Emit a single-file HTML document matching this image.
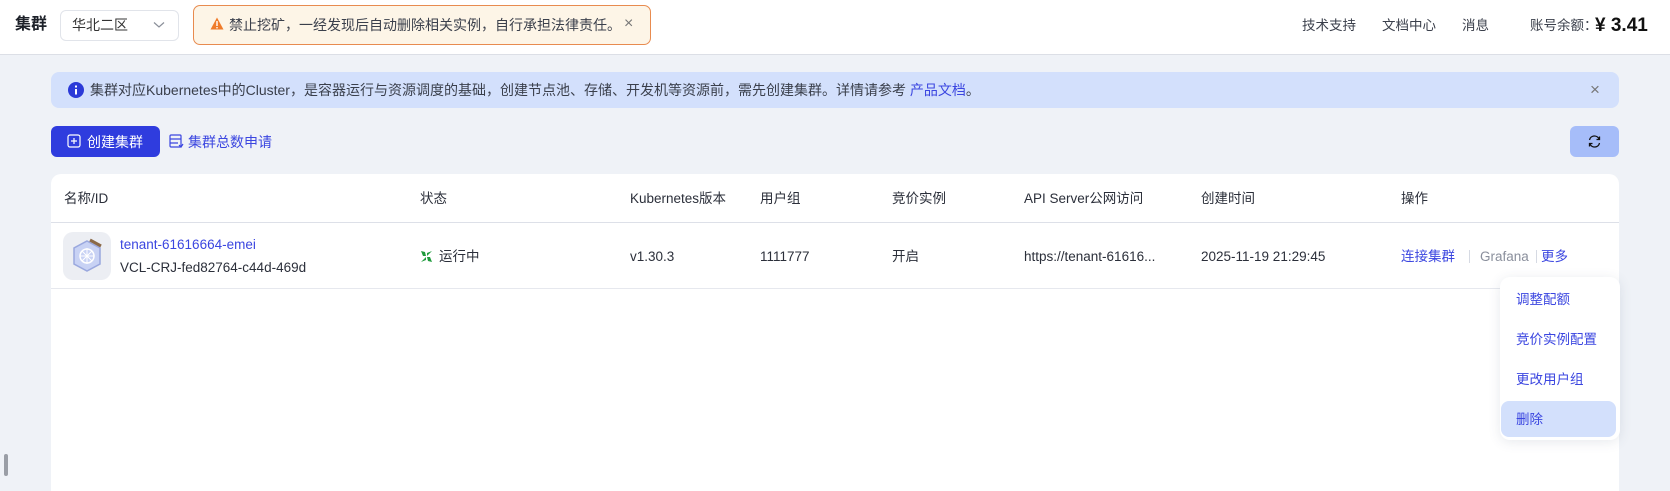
<!DOCTYPE html>
<html><head><meta charset="utf-8"><style>
*{box-sizing:border-box;margin:0;padding:0}
html{width:1670px;height:491px;overflow:hidden}
body{width:1670px;height:491px;overflow:hidden;background:#eff2f7;font-family:"Liberation Sans","Noto Sans CJK SC",sans-serif;font-size:13.5px;color:#2b2f3a;position:relative}
.abs{position:absolute}
.top{left:0;top:0;width:1670px;height:55px;background:#fff;border-bottom:1px solid #dcdfe6}
.t{position:absolute;white-space:nowrap;line-height:1}
.blue{color:#3b46e0}
</style></head><body>
<div class="abs top"></div>
<div class="t" style="left:15px;top:17px;font-size:16px;font-weight:bold;color:#1d2129">集群</div>
<div class="abs" style="left:60px;top:10px;width:119px;height:31px;border:1px solid #e1e4ea;border-radius:6px"></div>
<div class="t" style="left:72px;top:18px;color:#333;font-size:14px">华北二区</div>
<svg class="abs" style="left:153px;top:21px" width="12" height="8" viewBox="0 0 12 8"><path d="M1 1.5L6 6L11 1.5" fill="none" stroke="#8a8f99" stroke-width="1.2"/></svg>
<div class="abs" style="left:193px;top:5px;width:458px;height:40px;background:#fdf5e7;border:1px solid #e88b4f;border-radius:7px"></div>
<svg class="abs" style="left:210px;top:17px" width="14" height="13" viewBox="0 0 14 13"><path d="M7 0.5L13.5 12.5H0.5Z" fill="#ef7b2a"/><rect x="6.3" y="4" width="1.4" height="5" fill="#fff"/><rect x="6.3" y="10" width="1.4" height="1.4" fill="#fff"/></svg>
<div class="t" style="left:229px;top:18px;color:#3a3f4b;font-size:14px">禁止挖矿，一经发现后自动删除相关实例，自行承担法律责任。</div>
<div class="t" style="left:624px;top:16px;color:#777;font-size:16px">×</div>
<div class="t" style="left:1302px;top:19px;color:#3a3f4b">技术支持</div>
<div class="t" style="left:1382px;top:19px;color:#3a3f4b">文档中心</div>
<div class="t" style="left:1462px;top:19px;color:#3a3f4b">消息</div>
<div class="t" style="left:1530px;top:19px;color:#3a3f4b">账号余额：</div>
<div class="t" style="left:1595px;top:16px;font-size:19px;font-weight:bold;color:#111">¥ 3.41</div>

<div class="abs" style="left:51px;top:72px;width:1568px;height:36px;background:#d3e0fc;border-radius:8px"></div>
<svg class="abs" style="left:68px;top:82px" width="16" height="16" viewBox="0 0 16 16"><circle cx="8" cy="8" r="8" fill="#2b3ad8"/><rect x="7" y="7" width="2" height="5.5" fill="#fff"/><rect x="7" y="3.5" width="2" height="2" fill="#fff"/></svg>
<div class="t" style="left:90px;top:83px;color:#3a3f4b;font-size:14px">集群对应Kubernetes中的Cluster，是容器运行与资源调度的基础，创建节点池、存储、开发机等资源前，需先创建集群。详情请参考 <span class="blue">产品文档</span>。</div>
<div class="t" style="left:1590px;top:81px;color:#777;font-size:17px">×</div>

<div class="abs" style="left:51px;top:126px;width:109px;height:31px;background:#2f3cde;border-radius:6px"></div>
<svg class="abs" style="left:67px;top:134px" width="14" height="14" viewBox="0 0 14 14"><rect x="1" y="1" width="12" height="12" rx="2" fill="none" stroke="#fff" stroke-width="1.2"/><path d="M7 4v6M4 7h6" stroke="#fff" stroke-width="1.2"/></svg>
<div class="t" style="left:87px;top:135px;color:#fff;font-size:14px">创建集群</div>
<svg class="abs" style="left:169px;top:134px" width="15" height="15" viewBox="0 0 15 15"><rect x="1" y="1" width="11" height="12" rx="1" fill="none" stroke="#3b46e0" stroke-width="1.2"/><path d="M1 5h11M1 9h8M10 11l2 2 2-3" fill="none" stroke="#3b46e0" stroke-width="1.2"/></svg>
<div class="t blue" style="left:188px;top:135px;font-size:14px">集群总数申请</div>
<div class="abs" style="left:1570px;top:126px;width:49px;height:31px;background:#a6bdf9;border-radius:6px"></div>
<svg class="abs" style="left:1587px;top:134px" width="15" height="15" viewBox="0 0 15 15"><path d="M2.5 6A5 5 0 0 1 12 5M12.5 9A5 5 0 0 1 3 10" fill="none" stroke="#111" stroke-width="1.3"/><path d="M12.5 2.5V5.5H9.5" fill="none" stroke="#111" stroke-width="1.3"/><path d="M2.5 12.5V9.5H5.5" fill="none" stroke="#111" stroke-width="1.3"/></svg>

<div class="abs" style="left:51px;top:174px;width:1568px;height:317px;background:#fff;border-radius:10px 10px 0 0"></div>
<div class="abs" style="left:51px;top:222px;width:1568px;height:1px;background:#dde0e8"></div>
<div class="abs" style="left:51px;top:288px;width:1568px;height:1px;background:#e6e8ee"></div>
<div class="t" style="left:64px;top:192px">名称/ID</div>
<div class="t" style="left:420px;top:192px">状态</div>
<div class="t" style="left:630px;top:192px">Kubernetes版本</div>
<div class="t" style="left:760px;top:192px">用户组</div>
<div class="t" style="left:892px;top:192px">竞价实例</div>
<div class="t" style="left:1024px;top:192px">API Server公网访问</div>
<div class="t" style="left:1201px;top:192px">创建时间</div>
<div class="t" style="left:1401px;top:192px">操作</div>

<div class="abs" style="left:63px;top:232px;width:48px;height:48px;background:#eceef3;border-radius:10px"></div>
<svg class="abs" style="left:70px;top:238px" width="34" height="36" viewBox="0 0 34 36"><path d="M17 3L30 10V26L17 33L4 26V10Z" fill="#c8d2f4" stroke="#9aa8de" stroke-width="1.5"/><path d="M20 2L31 8" stroke="#8b6a48" stroke-width="3"/><circle cx="17" cy="18" r="7" fill="none" stroke="#fff" stroke-width="1.5"/><path d="M17 10V26M10 18H24M12 13L22 23M22 13L12 23" stroke="#fff" stroke-width="1"/></svg>
<div class="t blue" style="left:120px;top:238px">tenant-61616664-emei</div>
<div class="t" style="left:120px;top:261px">VCL-CRJ-fed82764-c44d-469d</div>
<svg class="abs" style="left:420px;top:250px" width="13" height="13" viewBox="0 0 13 13"><path d="M1 1L6 6L3 6ZM12 1L7 6L7 3ZM12 12L7 7L10 7ZM1 12L6 7L6 10ZM1 1L5 2L6 6ZM12 12L8 11L7 7Z" fill="#1f9b3c"/></svg>
<div class="t" style="left:439px;top:250px">运行中</div>
<div class="t" style="left:630px;top:250px">v1.30.3</div>
<div class="t" style="left:760px;top:250px">1111777</div>
<div class="t" style="left:892px;top:250px">开启</div>
<div class="t" style="left:1024px;top:250px">https://tenant-61616...</div>
<div class="t" style="left:1201px;top:250px">2025-11-19 21:29:45</div>
<div class="t blue" style="left:1401px;top:250px">连接集群</div>
<div class="abs" style="left:1469px;top:250px;width:1px;height:13px;background:#d6dae3"></div>
<div class="t" style="left:1480px;top:250px;color:#8a8f9c">Grafana</div>
<div class="abs" style="left:1536px;top:250px;width:1px;height:13px;background:#d6dae3"></div>
<div class="t blue" style="left:1541px;top:250px">更多</div>

<div class="abs" style="left:1500px;top:277px;width:120px;height:163px;background:#fff;border-radius:10px;box-shadow:0 2px 12px rgba(60,70,110,.12)"></div>
<div class="abs" style="left:1501px;top:401px;width:115px;height:36px;background:#d3e0fc;border-radius:8px"></div>
<div class="t blue" style="left:1516px;top:293px">调整配额</div>
<div class="t blue" style="left:1516px;top:333px">竞价实例配置</div>
<div class="t blue" style="left:1516px;top:373px">更改用户组</div>
<div class="t blue" style="left:1516px;top:413px">删除</div>
<div class="abs" style="left:4px;top:454px;width:4px;height:22px;background:#9a9ea6;border-radius:2px"></div>
</body></html>
